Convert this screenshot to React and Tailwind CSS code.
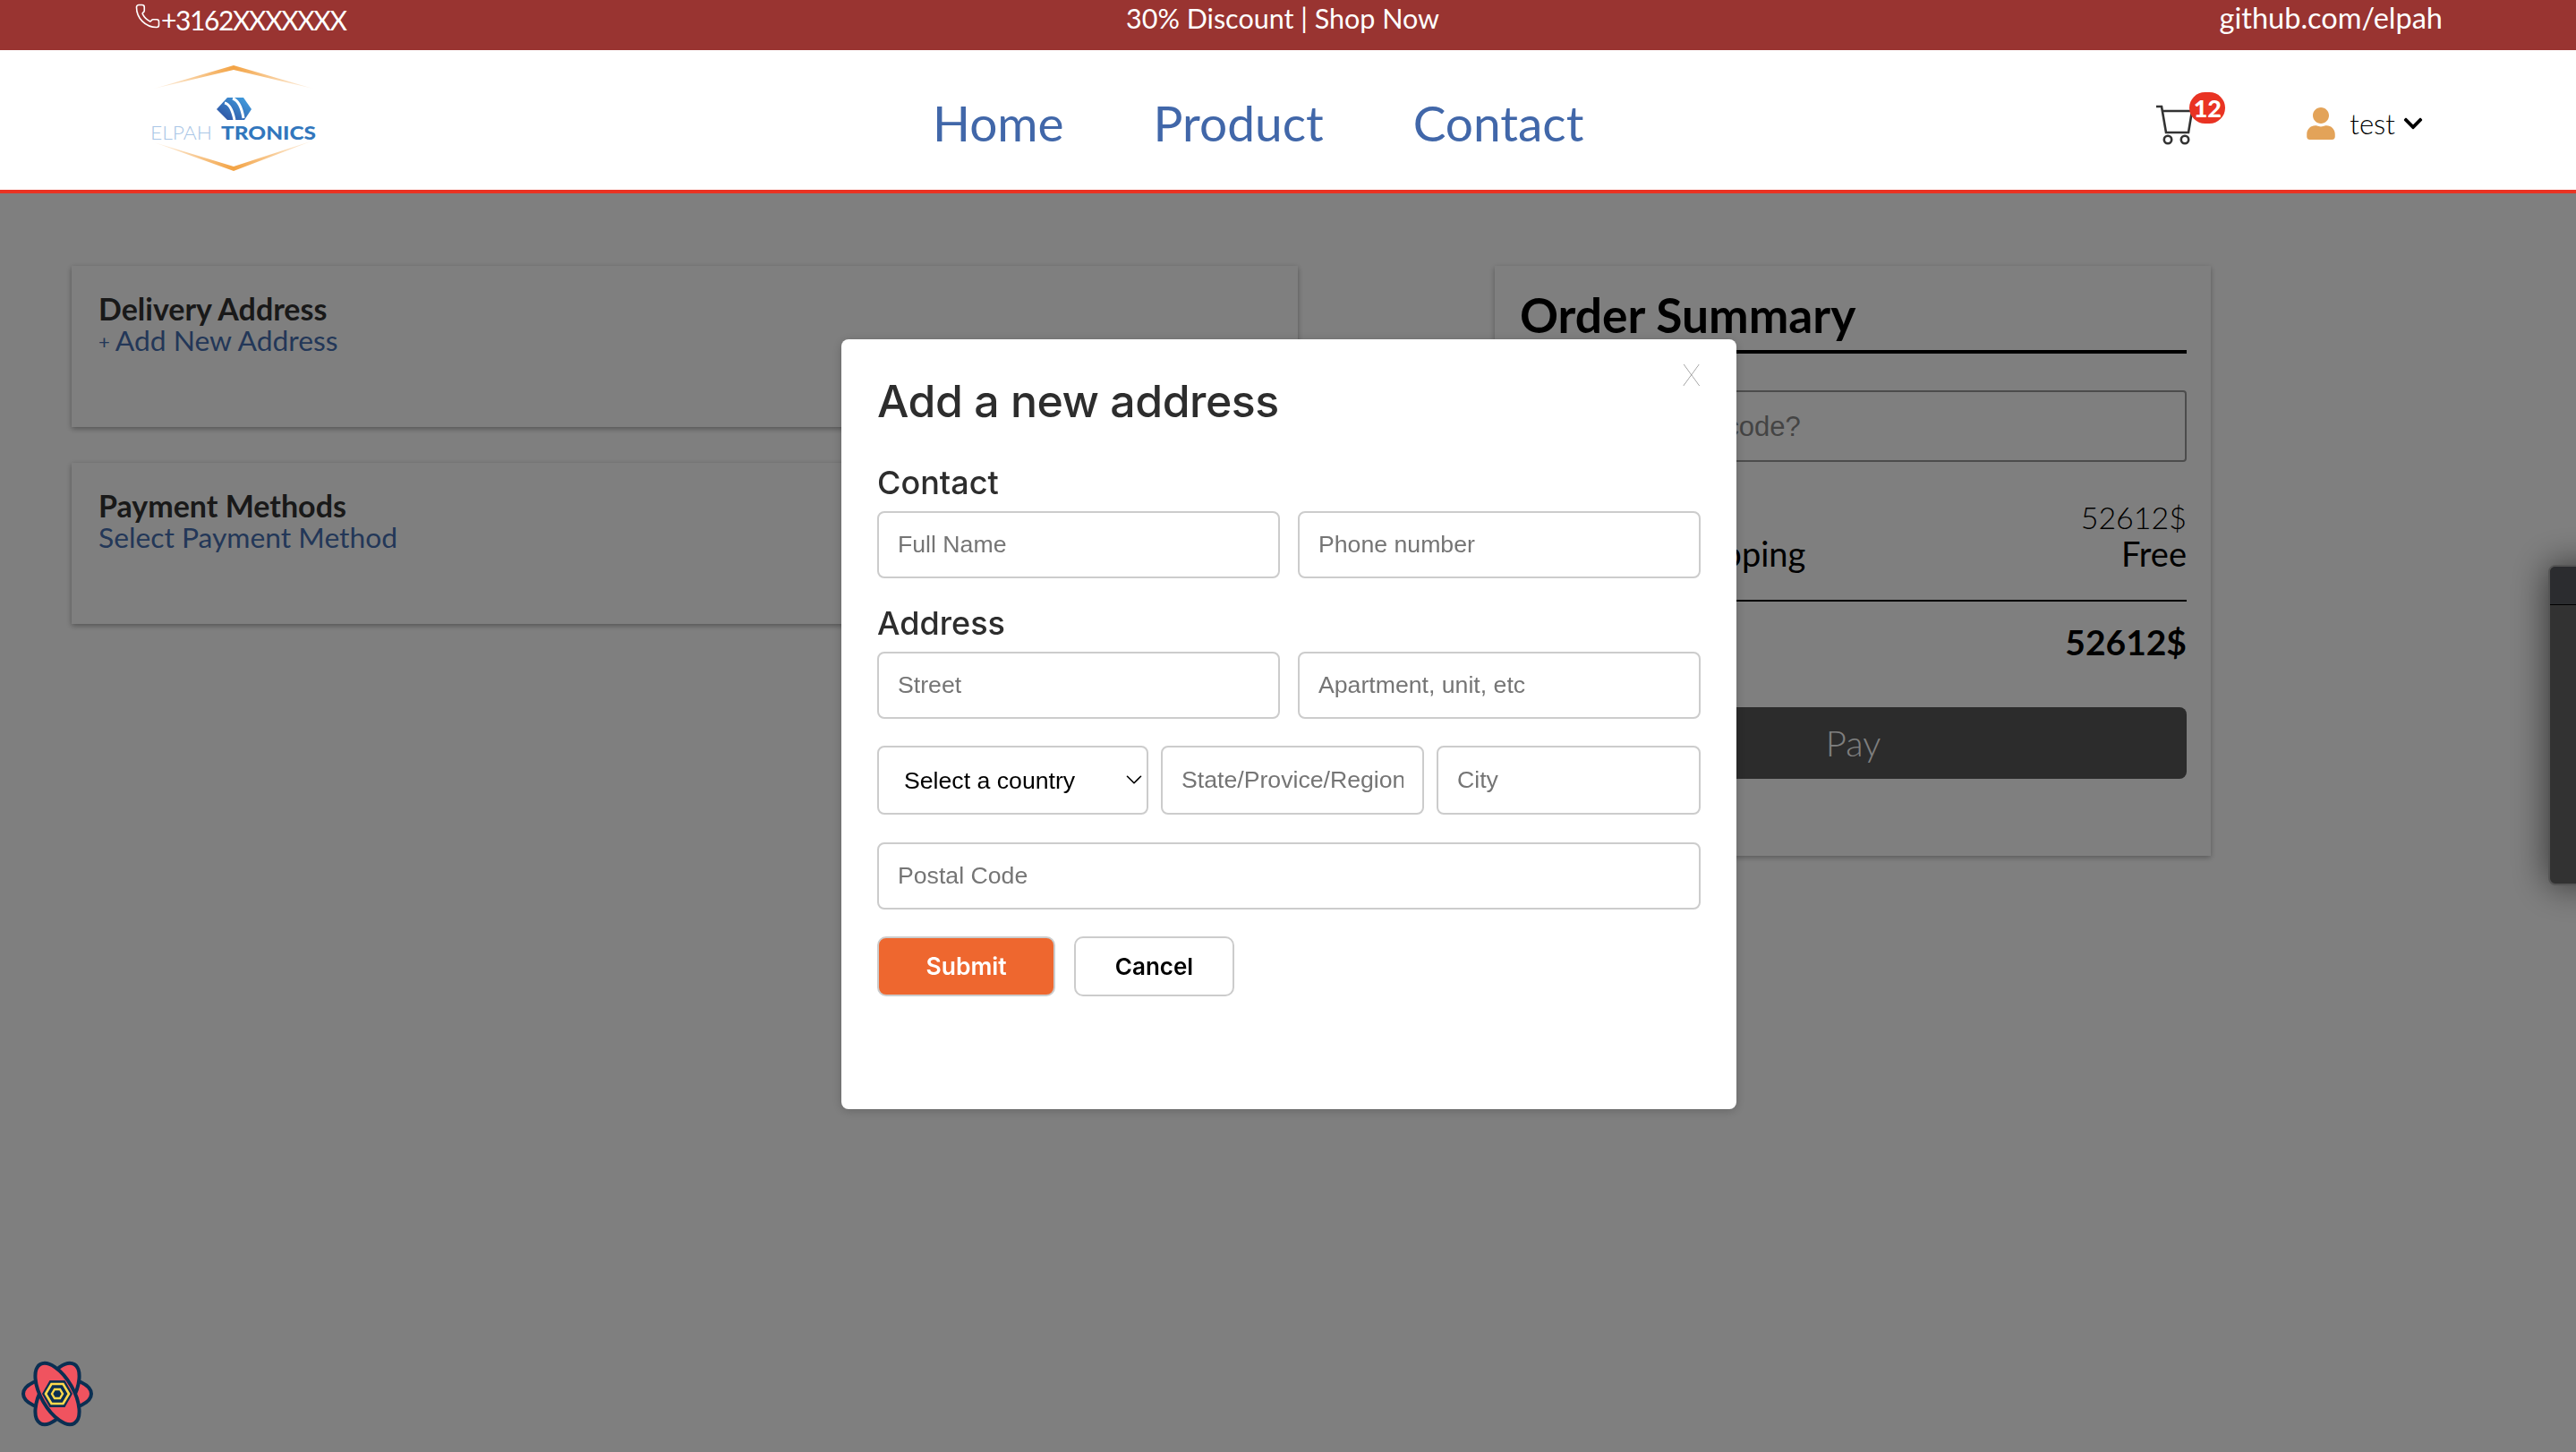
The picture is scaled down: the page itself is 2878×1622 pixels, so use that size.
import React from 'react';
import { Phone, ChevronDown } from 'lucide-react';
import { FaUser, FaChevronDown } from 'react-icons/fa';

const raleway = "font-['Lato',sans-serif]";
const arial = "font-['Liberation_Sans',Arial,sans-serif]";
const gilroy = "font-['Inter',sans-serif]";

const Logo = () => (
  <svg width="190" height="124" viewBox="0 0 190 124" className="shrink-0">
    <defs>
      <linearGradient id="lg" x1="0" y1="0" x2="1" y2="0">
        <stop offset="0" stopColor="#f3a344" stopOpacity="0.1" />
        <stop offset="0.5" stopColor="#f3a344" />
        <stop offset="1" stopColor="#f3a344" stopOpacity="0.1" />
      </linearGradient>
      <linearGradient id="ic" x1="0" y1="1" x2="1" y2="0">
        <stop offset="0" stopColor="#2c4a9c" />
        <stop offset="1" stopColor="#43a5e4" />
      </linearGradient>
    </defs>
    <polygon points="4,27 93,1 182,27 93,6" fill="url(#lg)" />
    <polygon points="4,87 93,119 182,85 93,114" fill="url(#lg)" />
    <polygon points="74,50 86,37 104,37 113,50 105,62 86,62" fill="url(#ic)" />
    <path d="M83 43 C88 44 92 52 94 62 M92 38 C98 40 102 48 104 60" stroke="#fff" strokeWidth="3" fill="none" />
    <text x="0" y="84" fontFamily="Lato, sans-serif" fontSize="21" fontWeight="300" fill="#a9c6e6" textLength="69" lengthAdjust="spacingAndGlyphs">ELPAH</text>
    <text x="79" y="84" fontFamily="Lato, sans-serif" fontSize="21" fontWeight="900" fill="#3277bd" textLength="106" lengthAdjust="spacingAndGlyphs">TRONICS</text>
  </svg>
);

const Cart = () => (
  <div className="relative w-[54px] h-[48px]">
    <svg width="44" height="48" viewBox="0 0 44 48" fill="none" stroke="#333" strokeWidth="2.6">
      <path d="M1 4 H7 L12 33 H37 L41 9 H8" />
      <circle cx="14" cy="41" r="4.2" />
      <circle cx="33" cy="41" r="4.2" />
    </svg>
    <span className={`absolute left-[38px] -top-[12px] w-[40px] h-[35px] rounded-full bg-[#e93323] text-white text-[27px] leading-[35px] font-black text-center ${raleway}`}>12</span>
  </div>
);

const QueryLogo = () => (
  <svg width="84" height="78" viewBox="-42 -39 84 78" className="fixed left-[21.5px] top-[1518px] z-40">
    {[0, 120, 60].map((r) => (
      <ellipse key={r} rx="38" ry="18" transform={`rotate(${r})`} fill="#f0535f" stroke="#0b2f52" strokeWidth="4" />
    ))}
    <polygon points="-17,0 -8.5,-15 8.5,-15 17,0 8.5,15 -8.5,15" fill="#0b2f52" />
    <polygon points="-13,0 -6.5,-11 6.5,-11 13,0 6.5,11 -6.5,11" fill="none" stroke="#ffd94c" strokeWidth="2.6" />
    <polygon points="-6,0 -3,-5 3,-5 6,0 3,5 -3,5" fill="none" stroke="#ffd94c" strokeWidth="2.4" />
  </svg>
);

const Field = ({ placeholder, className = '' }) => (
  <input
    placeholder={placeholder}
    className={`h-[75px] min-w-0 px-[21px] bg-white border-2 border-[#ccc] rounded-lg text-[26.67px] outline-none placeholder:text-[#757575] ${arial} ${className}`}
  />
);

const Modal = () => (
  <div className="fixed inset-0 z-30 bg-black/50 flex items-center justify-center pl-[2px] pb-[4px]">
    <div className="relative w-[1000px] h-[860px] bg-white rounded-lg px-10 pt-[38px] shadow-[0_2px_12px_rgba(0,0,0,0.2)]">
      <button className={`absolute right-[40px] top-[22px] text-[34px] font-thin leading-none text-[#555] ${raleway}`}>X</button>
      <h2 className={`text-[50px] leading-[62px] font-medium text-[#2d2d2d] tracking-[-0.5px] ${gilroy}`}>Add a new address</h2>
      <h3 className={`mt-[36px] text-[36px] leading-[48px] font-medium text-[#2d2d2d] ${gilroy}`}>Contact</h3>
      <div className="mt-[8px] grid grid-cols-2 gap-5">
        <Field placeholder="Full Name" />
        <Field placeholder="Phone number" />
      </div>
      <h3 className={`mt-[26px] text-[36px] leading-[48px] font-medium text-[#2d2d2d] ${gilroy}`}>Address</h3>
      <div className="mt-[8px] grid grid-cols-2 gap-5">
        <Field placeholder="Street" />
        <Field placeholder="Apartment, unit, etc" />
      </div>
      <div className="mt-[30px] flex gap-[14px]">
        <div className="relative w-[303px] shrink-0">
          <select className={`w-full h-[77px] pl-[28px] appearance-none bg-white border-2 border-[#ccc] rounded-lg text-[26.67px] text-black outline-none ${arial}`}>
            <option>Select a country</option>
          </select>
          <ChevronDown className="absolute right-[1px] top-[23px] w-[30px] h-[30px] text-black pointer-events-none" strokeWidth={1.3} />
        </div>
        <Field placeholder="State/Provice/Region" className="!h-[77px] w-[294px]" />
        <Field placeholder="City" className="!h-[77px] flex-1" />
      </div>
      <Field placeholder="Postal Code" className="mt-[31px] w-full block" />
      <div className="mt-[30px] flex gap-[21px]">
        <button className={`w-[199px] h-[67px] rounded-[10px] border-2 border-[#ccc] bg-[#ee672f] text-white text-[26.5px] font-semibold ${gilroy}`}>Submit</button>
        <button className={`w-[179px] h-[67px] rounded-[10px] border-2 border-[#ccc] bg-white text-black text-[26px] font-semibold ${gilroy}`}>Cancel</button>
      </div>
    </div>
  </div>
);

const InfoCard = ({ title, children }) => (
  <div className={`h-[180px] bg-white px-[30px] pt-[31px] shadow-[0_2px_6px_rgba(0,0,0,0.35)] ${raleway}`}>
    <h3 className="text-[34px] leading-[34px] font-bold text-[#333]">{title}</h3>
    <a className="block text-[31.8px] leading-[36px] text-[#466fb0]">{children}</a>
  </div>
);

export default function App() {
  return (
    <div className="min-h-screen bg-white relative">
      <div className="relative z-40">
        <div className={`h-14 bg-[#993431] text-white flex items-start justify-between pl-[150px] pr-[149px] ${raleway}`}>
          <div className="flex items-start">
            <Phone className="w-[30px] h-[30px] mt-[3px]" strokeWidth={1.3} />
            <span className="text-[30px] leading-[44px] tracking-[-1.4px]">+3162XXXXXXX</span>
          </div>
          <span className="text-[30.5px] leading-[40px]">30% Discount | Shop Now</span>
          <span className="text-[32.5px] leading-[40px]">github.com/elpah</span>
        </div>
        <header className="h-[160px] bg-white border-b-4 border-[#e93323] flex items-center pl-[168px]">
          <Logo />
          <nav className={`ml-[684px] pt-[7px] flex gap-[100px] text-[55px] text-[#4167a9] ${raleway}`}>
            <a>Home</a>
            <a>Product</a>
            <a>Contact</a>
          </nav>
          <div className="ml-[639px] mt-[9px]">
            <Cart />
          </div>
          <div className={`ml-[115px] mt-[8px] flex items-center text-[31px] text-black ${raleway}`}>
            <FaUser className="w-[32px] h-[36px] text-[#e3a359]" />
            <span className="ml-[16px] font-light">test</span>
            <FaChevronDown className="ml-[8px] w-[24px] h-[24px]" />
          </div>
        </header>
      </div>

      <main className="flex items-start pl-20 pt-[81px] gap-[220px]">
        <div className="w-[1370px] flex flex-col gap-10">
          <InfoCard title="Delivery Address">
            <span className="text-[22px] align-[2px] mr-[6px]">+</span>Add New Address
          </InfoCard>
          <InfoCard title="Payment Methods">Select Payment Method</InfoCard>
        </div>
        <aside className={`w-[800px] h-[659px] bg-white pl-7 pr-[27px] pt-[22px] shadow-[0_2px_6px_rgba(0,0,0,0.3)] ${raleway}`}>
          <h2 className="text-[53.3px] leading-[64px] font-bold text-black pb-[8px] border-b-4 border-black">Order Summary</h2>
          <input
            placeholder="Have a promo code?"
            className={`mt-[41px] w-full h-[80px] px-6 pt-[2px] border-2 border-[#999] rounded-sm text-[31px] outline-none placeholder:text-[#888] ${arial}`}
          />
          <div className="mt-[42px] text-[38px] leading-[40px] text-black pb-[32px] border-b-2 border-black">
            <div className="flex justify-between items-center">
              <span>Subtotal</span>
              <span className="text-[34px] font-light">52612$</span>
            </div>
            <div className="flex justify-between">
              <span>Estimated Shipping</span>
              <span>Free</span>
            </div>
          </div>
          <div className="mt-[21px] flex justify-between text-[39px] leading-[48px] font-bold text-black">
            <span>Total</span>
            <span>52612$</span>
          </div>
          <button className="mt-[49px] w-full h-20 rounded-lg bg-[#585858] text-white text-[40px] font-light">Pay</button>
        </aside>
      </main>

      <Modal />

      <QueryLogo />
      {/* side panel that sticks out from the right edge */}
      <div className="fixed z-40 left-[2847px] top-[631px] w-[60px] h-[358px] rounded-lg border-2 border-[#555] bg-[#323232] overflow-hidden shadow-[0_0_40px_rgba(0,0,0,0.6)]">
        <div className="h-[43px] bg-[#2b2c2f] border-b border-black" />
      </div>
    </div>
  );
}
